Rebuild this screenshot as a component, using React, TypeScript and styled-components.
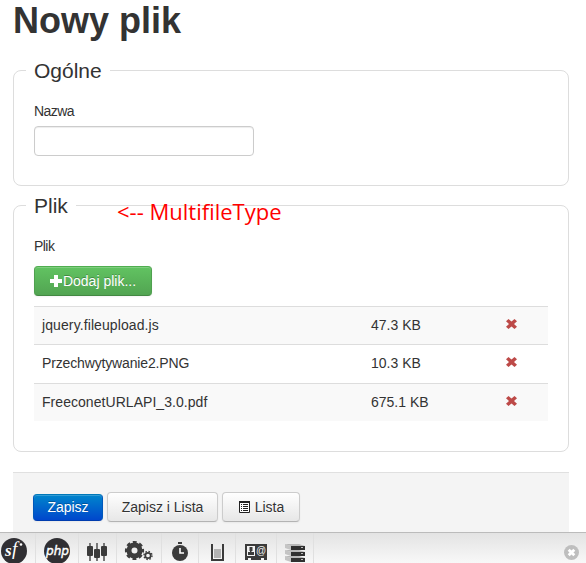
import React from 'react';
import styled, { createGlobalStyle, css } from 'styled-components';

const GlobalStyle = createGlobalStyle`
  * { box-sizing: border-box; }
  body {
    margin: 0;
    background: #fff;
    color: #333;
    font: 14px/20px "Liberation Sans", Arial, sans-serif;
  }
`;

const Page = styled.div`
  height: 100vh;
  display: flex;
  flex-direction: column;
  overflow: hidden;
`;

const Content = styled.main`
  flex: 1;
  min-height: 0;
  overflow: hidden;
  padding: 0 17px 0 13px;
`;

const Title = styled.h1`
  margin: 0 0 28px;
  font-size: 36px;
  line-height: 42px;
  font-weight: bold;
`;

const Group = styled.section<{ $height: number }>`
  position: relative;
  height: ${(p) => p.$height}px;
  margin-bottom: 19px;
  padding: 0 20px;
  border: 1px solid #ddd;
  border-radius: 8px;
`;

const Legend = styled.h2`
  width: fit-content;
  margin: -11px 0 19px -8px;
  padding: 0 8px;
  background: #fff;
  font-size: 21px;
  line-height: 22px;
  font-weight: normal;
`;

const Label = styled.label<{ $gap?: number }>`
  display: block;
  margin-bottom: ${(p) => p.$gap ?? 5}px;
  letter-spacing: -0.55px;
`;

const TextInput = styled.input`
  display: block;
  width: 220px;
  height: 30px;
  padding: 4px 6px;
  border: 1px solid #ccc;
  border-radius: 4px;
  box-shadow: inset 0 1px 1px rgba(0, 0, 0, 0.075);
  font: inherit;
`;

const Note = styled.span`
  position: absolute;
  left: 103px;
  top: -9px;
  color: #f00;
  font: 22px/28px "Open Sans", "Noto Sans", sans-serif;
  white-space: nowrap;
`;

const variants = {
  plain: css`
    color: #333;
    text-shadow: 0 1px 1px rgba(255, 255, 255, 0.75);
    background: linear-gradient(#fff, #e6e6e6);
    border-color: #ccc #ccc #b3b3b3;
  `,
  success: css`
    color: #fff;
    text-shadow: 0 -1px 0 rgba(0, 0, 0, 0.25);
    background: linear-gradient(#62c462, #51a351);
    border-color: #4fae4f #4fa04f #438843;
  `,
  primary: css`
    color: #fff;
    text-shadow: 0 -1px 0 rgba(0, 0, 0, 0.25);
    background: linear-gradient(#0088cc, #0044cc);
    border-color: #0078b8 #0058bb #003cae;
  `,
};

const Button = styled.button<{ $variant: keyof typeof variants; $width: number; $height?: number }>`
  display: flex;
  align-items: center;
  justify-content: center;
  width: ${(p) => p.$width}px;
  height: ${(p) => p.$height ?? 30}px;
  padding: 0;
  border: 1px solid;
  border-radius: 4px;
  font: inherit;
  box-shadow: inset 0 1px 0 rgba(255, 255, 255, 0.2), 0 1px 2px rgba(0, 0, 0, 0.05);
  ${(p) => variants[p.$variant]}
  background-origin: border-box;
`;

const Files = styled.div`
  margin-top: 10px;
`;

const FileRow = styled.div`
  display: grid;
  grid-template-columns: 329px 135px 1fr;
  height: 38px;
  padding: 8px 8px 0;
  border-top: 1px solid #ddd;
  &:nth-child(odd) { background: #f9f9f9; }
  &:nth-child(even) { height: 39px; }
`;

const FileName = styled.span<{ $tracking: number }>`
  letter-spacing: ${(p) => p.$tracking}px;
`;

const Remove = styled.svg`
  display: block;
  width: 11px;
  height: 10px;
  margin-top: 4px;
`;

const Actions = styled.div`
  display: flex;
  align-items: center;
  gap: 4px;
  height: 69px;
  margin-top: 20px;
  padding-left: 20px;
  border-top: 1px solid #e0e0e0;
  background: #f4f4f4;
`;

const DebugBar = styled.footer`
  display: flex;
  height: 31px;
  flex: none;
  border-top: 1px solid #bbb;
  background: linear-gradient(#e3e3e3, #f8f8f8);
`;

const Cell = styled.div<{ $width: number }>`
  width: ${(p) => p.$width}px;
  height: 30px;
  border-right: 1px solid #e0e0e0;
  svg { display: block; }
`;

const Close = styled.svg`
  display: block;
  margin: 12px 7px 0 auto;
`;

const files = [
  { name: 'jquery.fileupload.js', size: '47.3 KB', tracking: 0.1 },
  { name: 'Przechwytywanie2.PNG', size: '10.3 KB', tracking: -0.15 },
  { name: 'FreeconetURLAPI_3.0.pdf', size: '675.1 KB', tracking: 0.05 },
];

const Plus = () => (
  <svg width="13" height="12" viewBox="0 0 13 12">
    <path d="M4 0h4v4h4v4H8v4H4V8H0V4h4z" fill="#fff" />
  </svg>
);

const List = () => (
  <svg width="17" height="12" viewBox="0 0 17 12">
    <path d="M1.500 1h10v10.500h-10z" fill="#fff" stroke="#222" />
    <path d="M1 0h11v2H1zM3 3h1v1H3zm2 0h5v1H5zM3 5h1v1H3zm2 0h5v1H5zM3 7h1v1H3zm2 0h5v1H5zM3 9h1v1H3zm2 0h5v1H5z" fill="#222" />
  </svg>
);

const SymfonyIcon = () => (
  <svg width="35" height="30" viewBox="0 0 35 30">
    <circle cx="14" cy="18" r="13" fill="#302f33" />
    <text x="5" y="23" fill="#fff" fontFamily="Liberation Serif, serif" fontStyle="italic" fontWeight="bold" fontSize="17">s</text>
    <text x="12" y="22" fill="#fff" fontFamily="Liberation Serif, serif" fontStyle="italic" fontSize="19">f</text>
    <circle cx="21" cy="11.500" r="1.300" fill="#fff" />
  </svg>
);

const PhpIcon = () => (
  <svg width="42" height="30" viewBox="0 0 42 30">
    <circle cx="21" cy="18" r="13" fill="#302f33" />
    <text x="10" y="21.500" fill="#fff" fontFamily="DejaVu Sans, sans-serif" fontStyle="italic" stroke="#fff" strokeWidth=".4" fontSize="12" textLength="23" lengthAdjust="spacingAndGlyphs">php</text>
  </svg>
);

const SlidersIcon = () => (
  <svg width="37" height="30" viewBox="0 0 37 30" fill="#3b3b3b">
    <path d="M10 10h2v18h-2zM17 10h2v18h-2zM24 10h2v18h-2z" fill="#777" />
    <rect x="8" y="13" width="6" height="10" rx="1" />
    <rect x="15" y="16" width="6" height="9" rx="1" />
    <rect x="22" y="13" width="6" height="10" rx="1" />
  </svg>
);

const GearsIcon = () => (
  <svg width="44" height="30" viewBox="0 0 44 30" fill="none" stroke="#3d3d3d">
    <circle cx="17.500" cy="17.500" r="5.500" strokeWidth="5" />
    <circle cx="17.500" cy="17.500" r="8.300" strokeWidth="2.600" strokeDasharray="3.8 2.719" strokeDashoffset="1.900" />
    <circle cx="31" cy="22.500" r="2.700" strokeWidth="1.700" />
    <circle cx="31" cy="22.500" r="4" strokeWidth="1.400" strokeDasharray="1.570 1.570" />
  </svg>
);

const ClockIcon = () => (
  <svg width="36" height="30" viewBox="0 0 36 30">
    <circle cx="18" cy="20" r="8" fill="#3b3b3b" />
    <path d="M16 9h4v2h-4z" fill="#3b3b3b" />
    <path d="M18 15v5h4" fill="none" stroke="#fff" strokeWidth="1.600" />
  </svg>
);

const MemoryIcon = () => (
  <svg width="36" height="30" viewBox="0 0 36 30">
    <path d="M13 11v16h11V11" fill="none" stroke="#3b3b3b" strokeWidth="2" />
    <path d="M15 16h7v9h-7z" fill="#b3b3b3" />
  </svg>
);

const UserIcon = () => (
  <svg width="40" height="30" viewBox="0 0 40 30">
    <path d="M9 11h22v16h-3v-2h-3v2H15v-2h-3v2H9z" fill="#3b3b3b" />
    <path d="M11 13h8v10h-8z" fill="#f2f2f2" />
    <path d="M13.500 14h3v4h-1v1H18v3h-6v-3h2v-1h-.5z" fill="#3b3b3b" />
    <text x="20" y="21" fill="#eee" fontFamily="Liberation Sans, sans-serif" fontSize="10">@</text>
  </svg>
);

const DatabaseIcon = () => (
  <svg width="37" height="30" viewBox="0 0 37 30">
    {[11, 17, 23].map((y) => (
      <g key={y}>
        <path d={`M8 ${y}l6 2v4l-6-2z`} fill="#c4c4c4" />
        <path d={`M8 ${y}h14l6 2H14z`} fill="#b8b8b8" />
        <path d={`M14 ${y + 2}h14v4H14z`} fill="#303030" />
        <path d={`M24 ${y + 3}h2v1h-2z`} fill="#bbb" />
      </g>
    ))}
  </svg>
);

const panels = [
  { width: 36, Icon: SymfonyIcon },
  { width: 43, Icon: PhpIcon },
  { width: 38, Icon: SlidersIcon },
  { width: 45, Icon: GearsIcon },
  { width: 37, Icon: ClockIcon },
  { width: 37, Icon: MemoryIcon },
  { width: 41, Icon: UserIcon },
  { width: 37, Icon: DatabaseIcon },
];

export default function App() {
  return (
    <Page>
      <GlobalStyle />
      <Content>
        <Title>Nowy plik</Title>
        <Group $height={116}>
          <Legend>Ogólne</Legend>
          <Label htmlFor="name">Nazwa</Label>
          <TextInput id="name" />
        </Group>
        <Group $height={247}>
          <Legend>Plik</Legend>
          <Note>&lt;-- MultifileType</Note>
          <Label as="div" $gap={10}>Plik</Label>
          <Button $variant="success" $width={118}><Plus />Dodaj plik...</Button>
          <Files>
            {files.map((file) => (
              <FileRow key={file.name}>
                <FileName $tracking={file.tracking}>{file.name}</FileName>
                <span>{file.size}</span>
                <Remove viewBox="0 0 11 10">
                  <path d="M2.500 0L5.500 2.500 8.500 0 11 2.300 8 5l3 2.700L8.500 10 5.500 7.500 2.500 10 0 7.700 3 5 0 2.300z" fill="#bd4a48" />
                </Remove>
              </FileRow>
            ))}
          </Files>
        </Group>
        <Actions>
          <Button $variant="primary" $width={70} $height={27}>Zapisz</Button>
          <Button $variant="plain" $width={111}>Zapisz i Lista</Button>
          <Button $variant="plain" $width={78}><List />Lista</Button>
        </Actions>
      </Content>
      <DebugBar>
        {panels.map(({ width, Icon }, i) => (
          <Cell key={i} $width={width}><Icon /></Cell>
        ))}
        <Close width="15" height="15" viewBox="0 0 15 15">
          <circle cx="7.500" cy="7.500" r="7.500" fill="#bebebe" />
          <path d="M4.700 4.700l5.600 5.600M10.300 4.700l-5.600 5.600" stroke="#fff" strokeWidth="2.800" />
        </Close>
      </DebugBar>
    </Page>
  );
}
